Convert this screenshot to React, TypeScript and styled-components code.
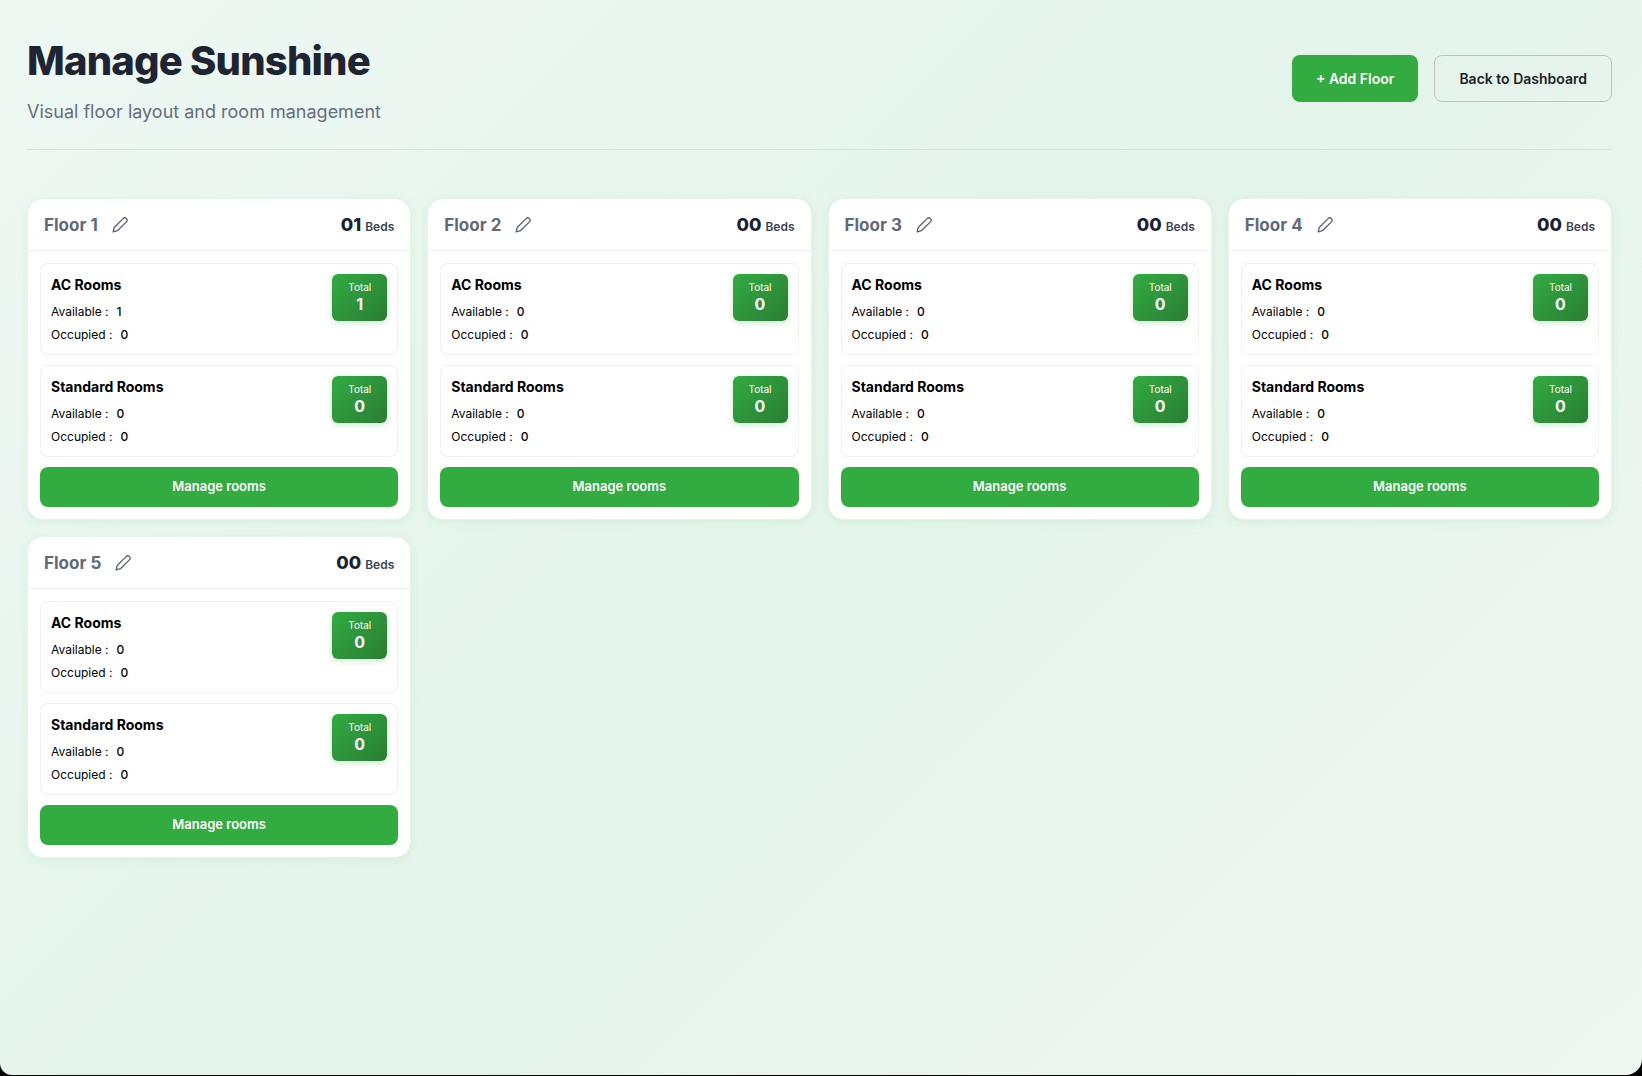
import React from "react";
import styled, { createGlobalStyle } from "styled-components";

const GlobalStyle = createGlobalStyle`
  *, *::before, *::after { box-sizing: border-box; }
  body {
    margin: 0;
    background: #000;
    font-family: Inter, "Liberation Sans", sans-serif;
    -webkit-font-smoothing: antialiased;
  }
  h1, h2, h3, p, dl, dd { margin: 0; }
  button { font-family: inherit; cursor: pointer; }
`;

const Page = styled.main`
  min-height: calc(100vh - 1px);
  padding: 32px 30px 32px 27px;
  border-radius: 0 0 16px 12px;
  background: linear-gradient(135deg, #eef8f3 0%, #e4f4ea 50%, #eef7f2 100%);
`;

const Header = styled.header`
  display: flex;
  align-items: center;
  justify-content: space-between;
  flex-wrap: wrap;
  gap: 16px;
  padding-bottom: 24px;
  margin-bottom: 48px;
  border-bottom: 1px solid #cfe9d6;
`;

const Title = styled.h1`
  font-size: 40px;
  line-height: 58px;
  font-weight: 800;
  letter-spacing: -0.02em;
  color: #1e2432;
`;

const Subtitle = styled.p`
  margin-top: 8px;
  font-size: 18px;
  line-height: 27px;
  color: #666e7e;
`;

const Actions = styled.div`
  display: flex;
  gap: 16px;
`;

const ActionButton = styled.button<{ $primary?: boolean }>`
  height: 47px;
  padding: 0 24px;
  border: ${(p) => (p.$primary ? "0" : "1px solid #bcc3bf")};
  border-radius: 8px;
  background: ${(p) => (p.$primary ? "#32ab41" : "transparent")};
  color: ${(p) => (p.$primary ? "#fff" : "#1c2326")};
  font-size: 14px;
  font-weight: 600;
`;

const FloorGrid = styled.section`
  display: grid;
  grid-template-columns: repeat(auto-fill, minmax(340px, 1fr));
  gap: 16px;
`;

const Card = styled.article`
  border: 1px solid #e4f5e9;
  border-radius: 16px;
  background: #fff;
  box-shadow: 0 2px 8px rgba(52, 172, 66, 0.1);
`;

const CardHeader = styled.div`
  display: flex;
  align-items: center;
  justify-content: space-between;
  height: 52px;
  padding: 0 16px;
  border-bottom: 1px solid #eff0f1;
`;

const FloorName = styled.div`
  display: flex;
  align-items: center;
  gap: 14px;
`;

const FloorTitle = styled.h2`
  font-size: 17px;
  line-height: 24px;
  font-weight: 700;
  color: #626978;
`;

const IconButton = styled.button`
  display: flex;
  padding: 0;
  border: 0;
  background: none;
  color: #5a6070;
`;

const Beds = styled.p`
  display: flex;
  align-items: baseline;
  gap: 4px;
  padding-top: 2px;
  font-size: 12px;
  line-height: 24px;
  font-weight: 600;
  color: #3a4352;
`;

const BedCount = styled.strong`
  font-size: 18px;
  font-weight: 800;
  color: #1a2230;
`;

const CardBody = styled.div`
  display: flex;
  flex-direction: column;
  gap: 10px;
  padding: 12px;
`;

const RoomBox = styled.section`
  display: flex;
  align-items: flex-start;
  justify-content: space-between;
  height: 92px;
  padding: 10px;
  border: 1px solid #f0f1f2;
  border-radius: 8px;
`;

const RoomTitle = styled.h3`
  margin-bottom: 4px;
  font-size: 14px;
  line-height: 22px;
  font-weight: 700;
  color: #000;
`;

const Stats = styled.dl`
  font-size: 12px;
  line-height: 23px;
  color: #000;
`;

const Stat = styled.div`
  display: flex;
  gap: 8px;
`;

const StatValue = styled.dd`
  font-weight: 500;
`;

const TotalBadge = styled.div`
  display: flex;
  flex-direction: column;
  align-items: center;
  justify-content: center;
  width: 55px;
  height: 47px;
  padding-bottom: 2px;
  border-radius: 6px;
  background: linear-gradient(135deg, #32ab41, #2a7d34);
  box-shadow: 0 2px 6px rgba(52, 172, 66, 0.25);
  color: #fff;
`;

const TotalLabel = styled.span`
  font-size: 10px;
  line-height: 14px;
`;

const TotalValue = styled.strong`
  font-size: 16px;
  line-height: 20px;
  font-weight: 700;
`;

const ManageButton = styled.button`
  height: 40px;
  padding: 0 12px 2px;
  border: 0;
  border-radius: 8px;
  background: #32ab41;
  color: #fff;
  font-size: 13px;
  font-weight: 600;
`;

const PencilIcon = () => (
  <svg width="16" height="16" viewBox="0 0 16 16" fill="none" stroke="currentColor" strokeWidth="1.3" strokeLinecap="round" strokeLinejoin="round" aria-hidden="true">
    <path d="M11.1 1.6 a2.3 2.3 0 0 1 3.3 3.3 L5.4 13.7 L1.2 14.8 L2.2 10.5 Z" />
  </svg>
);

type Rooms = { name: string; available: number; occupied: number };
type Floor = { name: string; rooms: Rooms[] };

const floors: Floor[] = [1, 2, 3, 4, 5].map((n) => ({
  name: `Floor ${n}`,
  rooms: [
    { name: "AC Rooms", available: n === 1 ? 1 : 0, occupied: 0 },
    { name: "Standard Rooms", available: 0, occupied: 0 },
  ],
}));

const total = (r: Rooms) => r.available + r.occupied;

const RoomSummary = ({ rooms }: { rooms: Rooms }) => (
  <RoomBox>
    <div>
      <RoomTitle>{rooms.name}</RoomTitle>
      <Stats>
        <Stat>
          <dt>Available :</dt>
          <StatValue>{rooms.available}</StatValue>
        </Stat>
        <Stat>
          <dt>Occupied :</dt>
          <StatValue>{rooms.occupied}</StatValue>
        </Stat>
      </Stats>
    </div>
    <TotalBadge>
      <TotalLabel>Total</TotalLabel>
      <TotalValue>{total(rooms)}</TotalValue>
    </TotalBadge>
  </RoomBox>
);

const FloorCard = ({ floor }: { floor: Floor }) => (
  <Card>
    <CardHeader>
      <FloorName>
        <FloorTitle>{floor.name}</FloorTitle>
        <IconButton type="button" aria-label={`Rename ${floor.name}`}>
          <PencilIcon />
        </IconButton>
      </FloorName>
      <Beds>
        <BedCount>{String(floor.rooms.reduce((sum, r) => sum + total(r), 0)).padStart(2, "0")}</BedCount>
        <span>Beds</span>
      </Beds>
    </CardHeader>
    <CardBody>
      {floor.rooms.map((r) => (
        <RoomSummary key={r.name} rooms={r} />
      ))}
      <ManageButton type="button">Manage rooms</ManageButton>
    </CardBody>
  </Card>
);

export default function App() {
  return (
    <>
      <GlobalStyle />
      <Page>
        <Header>
          <div>
            <Title>Manage Sunshine</Title>
            <Subtitle>Visual floor layout and room management</Subtitle>
          </div>
          <Actions>
            <ActionButton type="button" $primary>+ Add Floor</ActionButton>
            <ActionButton type="button">Back to Dashboard</ActionButton>
          </Actions>
        </Header>
        <FloorGrid>
          {floors.map((f) => (
            <FloorCard key={f.name} floor={f} />
          ))}
        </FloorGrid>
      </Page>
    </>
  );
}
